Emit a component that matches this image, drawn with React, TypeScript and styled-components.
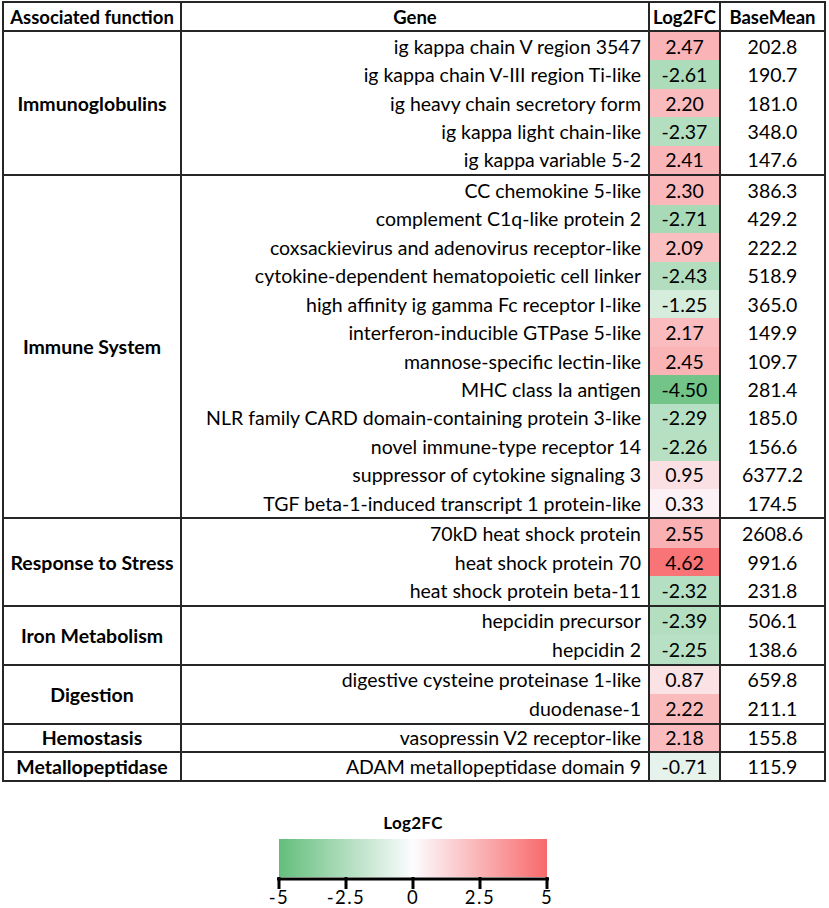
import React from "react";
import styled, { createGlobalStyle } from "styled-components";

type Row = { gene: string; fc: number; base: string };
type Group = { name: string; rows: Row[] };

const groups: Group[] = [
  {
    name: "Immunoglobulins",
    rows: [
      { gene: "ig kappa chain V region 3547", fc: 2.47, base: "202.8" },
      { gene: "ig kappa chain V-III region Ti-like", fc: -2.61, base: "190.7" },
      { gene: "ig heavy chain secretory form", fc: 2.2, base: "181.0" },
      { gene: "ig kappa light chain-like", fc: -2.37, base: "348.0" },
      { gene: "ig kappa variable 5-2", fc: 2.41, base: "147.6" },
    ],
  },
  {
    name: "Immune System",
    rows: [
      { gene: "CC chemokine 5-like", fc: 2.3, base: "386.3" },
      { gene: "complement C1q-like protein 2", fc: -2.71, base: "429.2" },
      { gene: "coxsackievirus and adenovirus receptor-like", fc: 2.09, base: "222.2" },
      { gene: "cytokine-dependent hematopoietic cell linker", fc: -2.43, base: "518.9" },
      { gene: "high affinity ig gamma Fc receptor I-like", fc: -1.25, base: "365.0" },
      { gene: "interferon-inducible GTPase 5-like", fc: 2.17, base: "149.9" },
      { gene: "mannose-specific lectin-like", fc: 2.45, base: "109.7" },
      { gene: "MHC class Ia antigen", fc: -4.5, base: "281.4" },
      { gene: "NLR family CARD domain-containing protein 3-like", fc: -2.29, base: "185.0" },
      { gene: "novel immune-type receptor 14", fc: -2.26, base: "156.6" },
      { gene: "suppressor of cytokine signaling 3", fc: 0.95, base: "6377.2" },
      { gene: "TGF beta-1-induced transcript 1 protein-like", fc: 0.33, base: "174.5" },
    ],
  },
  {
    name: "Response to Stress",
    rows: [
      { gene: "70kD heat shock protein", fc: 2.55, base: "2608.6" },
      { gene: "heat shock protein 70", fc: 4.62, base: "991.6" },
      { gene: "heat shock protein beta-11", fc: -2.32, base: "231.8" },
    ],
  },
  {
    name: "Iron Metabolism",
    rows: [
      { gene: "hepcidin precursor", fc: -2.39, base: "506.1" },
      { gene: "hepcidin 2", fc: -2.25, base: "138.6" },
    ],
  },
  {
    name: "Digestion",
    rows: [
      { gene: "digestive cysteine proteinase 1-like", fc: 0.87, base: "659.8" },
      { gene: "duodenase-1", fc: 2.22, base: "211.1" },
    ],
  },
  {
    name: "Hemostasis",
    rows: [{ gene: "vasopressin V2 receptor-like", fc: 2.18, base: "155.8" }],
  },
  {
    name: "Metallopeptidase",
    rows: [{ gene: "ADAM metallopeptidase domain 9", fc: -0.71, base: "115.9" }],
  },
];

const WHITE = [252, 252, 255];
const GREEN = [99, 190, 123];
const RED = [248, 105, 107];

function scaleColor(v: number): string {
  const t = Math.min(1, Math.abs(v) / 5);
  const end = v < 0 ? GREEN : RED;
  const c = WHITE.map((w, i) => Math.round(w + (end[i] - w) * t));
  return `rgb(${c[0]}, ${c[1]}, ${c[2]})`;
}

const LINE = "2px solid #262626";

const GlobalStyle = createGlobalStyle`
  html, body { margin: 0; padding: 0; background: #ffffff; }
  body {
    font-family: Lato, "Liberation Sans", sans-serif;
    color: #000000;
  }
`;

const Page = styled.div`
  width: 829px;
  padding: 1px 0 0 2px;
  box-sizing: border-box;
`;

const Table = styled.div`
  width: 824px;
  border: ${LINE};
  box-sizing: border-box;
`;

const HeaderRow = styled.div`
  display: grid;
  grid-template-columns: 178px 468px 71px 1fr;
  height: 29px;
  border-bottom: ${LINE};
  box-sizing: border-box;
`;

const HeaderCell = styled.div<{ $last?: boolean }>`
  display: flex;
  align-items: center;
  justify-content: center;
  font-weight: 700;
  font-size: 18.5px;
  border-right: ${(p) => (p.$last ? "none" : LINE)};
  white-space: nowrap;
`;

const GroupBlock = styled.div<{ $last?: boolean }>`
  display: grid;
  grid-template-columns: 178px 1fr;
  border-bottom: ${(p) => (p.$last ? "none" : LINE)};
`;

const GroupLabel = styled.div`
  display: flex;
  align-items: center;
  justify-content: center;
  text-align: center;
  font-weight: 700;
  font-size: 19.5px;
  border-right: ${LINE};
  white-space: nowrap;
`;

const RowList = styled.div`
  display: flex;
  flex-direction: column;
`;

const DataRow = styled.div<{ $h: number }>`
  display: grid;
  grid-template-columns: 468px 71px 1fr;
  height: ${(p) => p.$h}px;
  font-size: 19.5px;
`;

const GeneCell = styled.div`
  display: flex;
  align-items: center;
  justify-content: flex-end;
  padding-right: 7px;
  border-right: ${LINE};
  white-space: nowrap;
`;

const FcCell = styled.div<{ $bg: string }>`
  display: flex;
  align-items: center;
  justify-content: center;
  background: ${(p) => p.$bg};
  border-right: ${LINE};
`;

const BaseCell = styled.div`
  display: flex;
  align-items: center;
  justify-content: center;
`;

const Legend = styled.div`
  width: 822px;
  display: flex;
  flex-direction: column;
  align-items: center;
`;

const LegendTitle = styled.div`
  margin-top: 31px;
  font-weight: 700;
  font-size: 17px;
  letter-spacing: 0.3px;
  line-height: 20px;
`;

const GradientBar = styled.div`
  margin-top: 6px;
  width: 268px;
  height: 38px;
  background: linear-gradient(to right, #63be7b, #fcfcff 50%, #f8696b);
`;

const Axis = styled.svg`
  display: block;
`;

const TickLabels = styled.div`
  display: grid;
  grid-template-columns: repeat(5, 67px);
  font-size: 18.5px;
  line-height: 14px;
  letter-spacing: 1.5px;
  padding-top: 1px;
`;

const TickLabel = styled.div`
  text-align: center;
`;

export default function App() {
  const ticks = ["-5", "-2.5", "0", "2.5", "5"];
  return (
    <Page>
      <GlobalStyle />
      <Table>
        <HeaderRow>
          <HeaderCell>Associated function</HeaderCell>
          <HeaderCell>Gene</HeaderCell>
          <HeaderCell>Log2FC</HeaderCell>
          <HeaderCell $last>BaseMean</HeaderCell>
        </HeaderRow>
        {groups.map((g, gi) => (
          <GroupBlock key={g.name} $last={gi === groups.length - 1}>
            <GroupLabel>{g.name}</GroupLabel>
            <RowList>
              {g.rows.map((r) => (
                <DataRow key={r.gene} $h={g.rows.length > 1 ? 28.45 : 26.8}>
                  <GeneCell>{r.gene}</GeneCell>
                  <FcCell $bg={scaleColor(r.fc)}>{r.fc.toFixed(2)}</FcCell>
                  <BaseCell>{r.base}</BaseCell>
                </DataRow>
              ))}
            </RowList>
          </GroupBlock>
        ))}
      </Table>
      <Legend>
        <LegendTitle>Log2FC</LegendTitle>
        <GradientBar />
        <Axis width={272} height={12} viewBox="0 0 272 12">
          <line x1={0} y1={2} x2={272} y2={2} stroke="#000" strokeWidth={3} />
          {[0, 1, 2, 3, 4].map((i) => (
            <line
              key={i}
              x1={2 + i * 67}
              y1={0}
              x2={2 + i * 67}
              y2={12}
              stroke="#000"
              strokeWidth={3}
            />
          ))}
        </Axis>
        <TickLabels>
          {ticks.map((t) => (
            <TickLabel key={t}>{t}</TickLabel>
          ))}
        </TickLabels>
      </Legend>
    </Page>
  );
}
